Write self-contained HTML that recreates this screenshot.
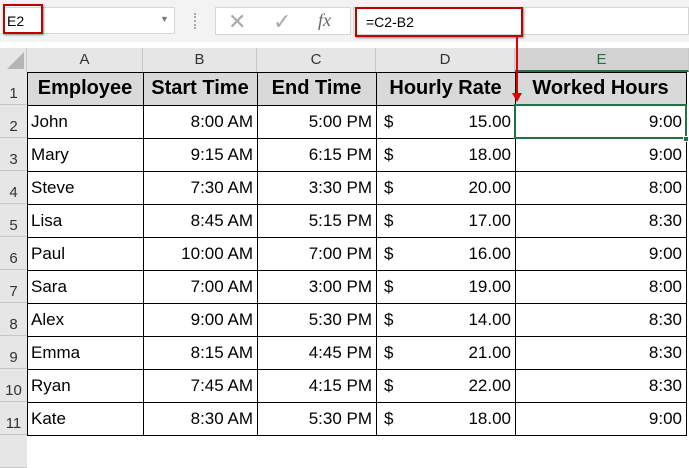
<!DOCTYPE html>
<html><head><style>
body{margin:0;width:689px;height:438px;overflow:hidden;background:#fff;font-family:"Liberation Sans",Arial,sans-serif;position:relative}
.a{position:absolute;box-sizing:border-box}
.c{position:absolute;box-sizing:border-box;height:33px;line-height:33px;font-size:17px;padding:0 4px;white-space:nowrap;overflow:hidden}
.h{position:absolute;top:48px;height:24px;line-height:24px;text-align:center;font-size:15px;color:#333;background:#e6e6e6;border-right:1px solid #c8c8c8;box-sizing:border-box}
.rn{position:absolute;left:0;width:27px;height:33px;background:#e6e6e6;border-bottom:1px solid #c8c8c8;box-sizing:border-box;text-align:center;font-size:15px;color:#333;padding-top:13px}
.r{text-align:right}
.hl{position:absolute;left:27px;width:659px;height:1px;background:#000}
.vl{position:absolute;top:72px;width:1px;height:364px;background:#000}
</style></head><body>
<div class="a" style="left:0;top:0;width:689px;height:42px;background:#f3f3f3"></div>
<div class="a" style="left:3px;top:7px;width:172px;height:27px;background:#fff;border:1px solid #d6d6d6"></div>
<div class="a" style="left:7px;top:13px;font-size:14px">E2</div>
<div class="a" style="left:160px;top:14px;font-size:9px;color:#777">▼</div>
<div class="a" style="left:3px;top:4px;width:40px;height:30px;border:2px solid #c00000;box-shadow:1px 1px 2px #888"></div>
<div class="a" style="left:194px;top:13px;width:2px;height:16px;border-left:2px dotted #aaa"></div>
<div class="a" style="left:215px;top:7px;width:136px;height:28px;background:#fff;border:1px solid #d6d6d6"></div>
<div class="a" style="left:228px;top:9px;font-size:22px;color:#aaa">✕</div>
<div class="a" style="left:273px;top:9px;font-size:22px;color:#aaa">✓</div>
<div class="a" style="left:318px;top:10px;font-size:18px;color:#666;font-style:italic;font-family:'Liberation Serif',serif">fx</div>
<div class="a" style="left:353px;top:7px;width:336px;height:28px;background:#fff;border:1px solid #d6d6d6"></div>
<div class="a" style="left:366px;top:14px;font-size:14px">=C2-B2</div>
<div class="a" style="left:355px;top:7px;width:168px;height:30px;border:2px solid #c00000;box-shadow:1px 1px 2px #888"></div>

<div class="h" style="left:0;width:27px"><div style="position:absolute;left:7px;top:4px;width:0;height:0;border-left:17px solid transparent;border-bottom:17px solid #b5b5b5"></div></div>
<div class="h" style="left:27px;width:116px">A</div>
<div class="h" style="left:143px;width:114px">B</div>
<div class="h" style="left:257px;width:119px">C</div>
<div class="h" style="left:376px;width:139px">D</div>
<div class="h" style="left:515px;width:174px;background:#d3d3d3;color:#217346;border-bottom:2px solid #217346">E</div>

<div class="a" style="left:27px;top:72px;width:659px;height:33px;background:#d9d9d9"></div>
<div class="c" style="top:72px;left:27px;width:116px;text-align:center;font-weight:bold;font-size:20px;padding:0">Employee</div>
<div class="c" style="top:72px;left:143px;width:114px;text-align:center;font-weight:bold;font-size:20px;padding:0">Start Time</div>
<div class="c" style="top:72px;left:257px;width:119px;text-align:center;font-weight:bold;font-size:20px;padding:0">End Time</div>
<div class="c" style="top:72px;left:376px;width:139px;text-align:center;font-weight:bold;font-size:20px;padding:0">Hourly Rate</div>
<div class="c" style="top:72px;left:515px;width:171px;text-align:center;font-weight:bold;font-size:20px;padding:0">Worked Hours</div>

<div class="rn" style="top:72px">1</div>
<div class="rn" style="top:105px">2</div>
<div class="rn" style="top:138px">3</div>
<div class="rn" style="top:171px">4</div>
<div class="rn" style="top:204px">5</div>
<div class="rn" style="top:237px">6</div>
<div class="rn" style="top:270px">7</div>
<div class="rn" style="top:303px">8</div>
<div class="rn" style="top:336px">9</div>
<div class="rn" style="top:369px">10</div>
<div class="rn" style="top:402px">11</div>
<div class="rn" style="top:435px"></div>

<div class="c" style="top:105px;left:27px">John</div><div class="c r" style="top:105px;left:143px;width:114px">8:00 AM</div><div class="c r" style="top:105px;left:257px;width:119px">5:00 PM</div><div class="c" style="top:105px;left:380px">$</div><div class="c r" style="top:105px;left:376px;width:139px">15.00</div><div class="c r" style="top:105px;left:515px;width:171px">9:00</div>
<div class="c" style="top:138px;left:27px">Mary</div><div class="c r" style="top:138px;left:143px;width:114px">9:15 AM</div><div class="c r" style="top:138px;left:257px;width:119px">6:15 PM</div><div class="c" style="top:138px;left:380px">$</div><div class="c r" style="top:138px;left:376px;width:139px">18.00</div><div class="c r" style="top:138px;left:515px;width:171px">9:00</div>
<div class="c" style="top:171px;left:27px">Steve</div><div class="c r" style="top:171px;left:143px;width:114px">7:30 AM</div><div class="c r" style="top:171px;left:257px;width:119px">3:30 PM</div><div class="c" style="top:171px;left:380px">$</div><div class="c r" style="top:171px;left:376px;width:139px">20.00</div><div class="c r" style="top:171px;left:515px;width:171px">8:00</div>
<div class="c" style="top:204px;left:27px">Lisa</div><div class="c r" style="top:204px;left:143px;width:114px">8:45 AM</div><div class="c r" style="top:204px;left:257px;width:119px">5:15 PM</div><div class="c" style="top:204px;left:380px">$</div><div class="c r" style="top:204px;left:376px;width:139px">17.00</div><div class="c r" style="top:204px;left:515px;width:171px">8:30</div>
<div class="c" style="top:237px;left:27px">Paul</div><div class="c r" style="top:237px;left:143px;width:114px">10:00 AM</div><div class="c r" style="top:237px;left:257px;width:119px">7:00 PM</div><div class="c" style="top:237px;left:380px">$</div><div class="c r" style="top:237px;left:376px;width:139px">16.00</div><div class="c r" style="top:237px;left:515px;width:171px">9:00</div>
<div class="c" style="top:270px;left:27px">Sara</div><div class="c r" style="top:270px;left:143px;width:114px">7:00 AM</div><div class="c r" style="top:270px;left:257px;width:119px">3:00 PM</div><div class="c" style="top:270px;left:380px">$</div><div class="c r" style="top:270px;left:376px;width:139px">19.00</div><div class="c r" style="top:270px;left:515px;width:171px">8:00</div>
<div class="c" style="top:303px;left:27px">Alex</div><div class="c r" style="top:303px;left:143px;width:114px">9:00 AM</div><div class="c r" style="top:303px;left:257px;width:119px">5:30 PM</div><div class="c" style="top:303px;left:380px">$</div><div class="c r" style="top:303px;left:376px;width:139px">14.00</div><div class="c r" style="top:303px;left:515px;width:171px">8:30</div>
<div class="c" style="top:336px;left:27px">Emma</div><div class="c r" style="top:336px;left:143px;width:114px">8:15 AM</div><div class="c r" style="top:336px;left:257px;width:119px">4:45 PM</div><div class="c" style="top:336px;left:380px">$</div><div class="c r" style="top:336px;left:376px;width:139px">21.00</div><div class="c r" style="top:336px;left:515px;width:171px">8:30</div>
<div class="c" style="top:369px;left:27px">Ryan</div><div class="c r" style="top:369px;left:143px;width:114px">7:45 AM</div><div class="c r" style="top:369px;left:257px;width:119px">4:15 PM</div><div class="c" style="top:369px;left:380px">$</div><div class="c r" style="top:369px;left:376px;width:139px">22.00</div><div class="c r" style="top:369px;left:515px;width:171px">8:30</div>
<div class="c" style="top:402px;left:27px">Kate</div><div class="c r" style="top:402px;left:143px;width:114px">8:30 AM</div><div class="c r" style="top:402px;left:257px;width:119px">5:30 PM</div><div class="c" style="top:402px;left:380px">$</div><div class="c r" style="top:402px;left:376px;width:139px">18.00</div><div class="c r" style="top:402px;left:515px;width:171px">9:00</div>

<div class="hl" style="top:72px"></div><div class="hl" style="top:105px"></div><div class="hl" style="top:138px"></div><div class="hl" style="top:171px"></div><div class="hl" style="top:204px"></div><div class="hl" style="top:237px"></div><div class="hl" style="top:270px"></div><div class="hl" style="top:303px"></div><div class="hl" style="top:336px"></div><div class="hl" style="top:369px"></div><div class="hl" style="top:402px"></div><div class="hl" style="top:435px"></div>
<div class="vl" style="left:27px"></div><div class="vl" style="left:143px"></div><div class="vl" style="left:257px"></div><div class="vl" style="left:376px"></div><div class="vl" style="left:515px"></div><div class="vl" style="left:686px"></div>

<div class="a" style="left:514px;top:104px;width:173px;height:35px;border:2px solid #217346"></div>
<div class="a" style="left:683px;top:136px;width:6px;height:6px;background:#217346;border:1px solid #fff"></div>
<div class="a" style="left:516px;top:37px;width:2px;height:57px;background:#e00000"></div>
<div class="a" style="left:512px;top:93px;width:0;height:0;border-left:5px solid transparent;border-right:5px solid transparent;border-top:9px solid #e00000"></div>
</body></html>
